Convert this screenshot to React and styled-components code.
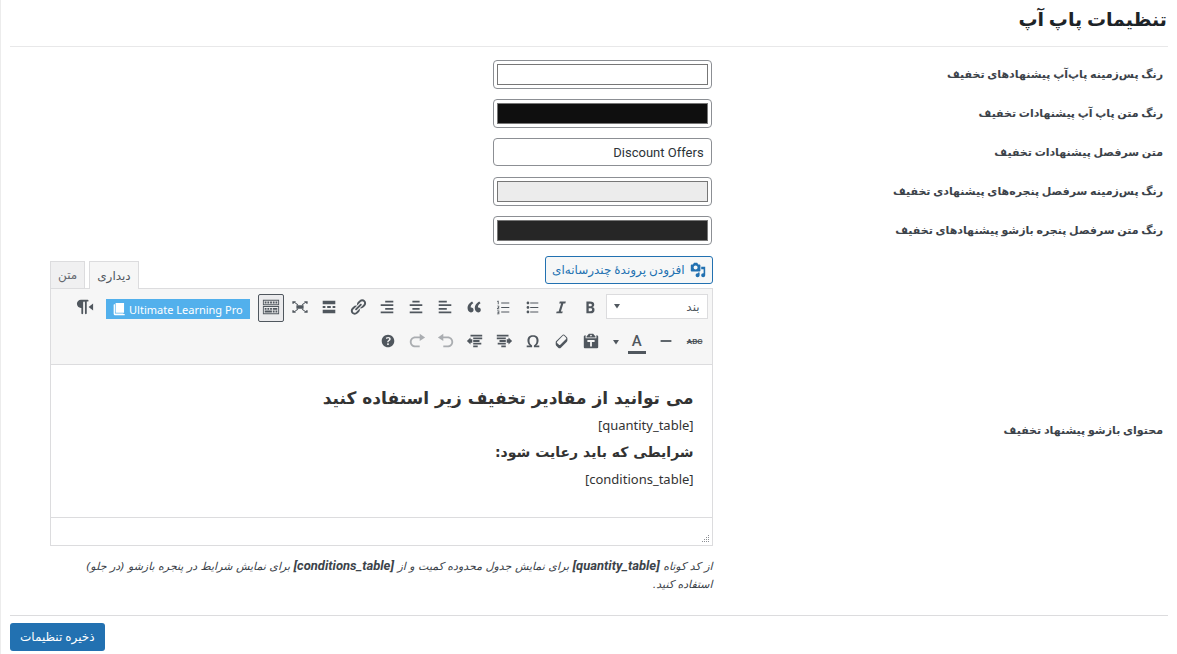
import React, { useState } from "react";
import styled, { createGlobalStyle } from "styled-components";

const icons = {
    bold: "M6 4v13h4.54c1.37 0 2.46-.33 3.26-1 .8-.66 1.2-1.58 1.2-2.77 0-.84-.17-1.51-.51-2.01s-.9-.85-1.67-1.03v-.09c.57-.1 1.02-.4 1.36-.9s.51-1.13.51-1.91c0-1.14-.39-1.98-1.17-2.5C12.75 4.26 11.5 4 9.78 4H6zm2.57 5.15V6.26h1.36c.73 0 1.27.11 1.61.32.34.22.51.58.51 1.07 0 .54-.16.92-.47 1.15s-.82.35-1.51.35h-1.5zm0 2.19h1.6c1.44 0 2.16.53 2.16 1.61 0 .6-.17 1.05-.51 1.34s-.86.43-1.57.43H8.57v-3.38z",
    italic: "M14.78 6h-2.13l-2.8 9h2.12l-.62 2H4.6l.62-2h2.14l2.8-9H8.03l.62-2h6.75z",
    bullets: "M5.5 7C4.67 7 4 6.33 4 5.5 4 4.68 4.67 4 5.5 4 6.32 4 7 4.68 7 5.5 7 6.33 6.32 7 5.5 7zM8 5h9v1H8V5zm-2.5 7c-.83 0-1.5-.67-1.5-1.5C4 9.68 4.67 9 5.5 9c.82 0 1.5.68 1.5 1.5 0 .83-.68 1.5-1.5 1.5zM8 10h9v1H8v-1zm-2.5 7c-.83 0-1.5-.67-1.5-1.5 0-.82.67-1.5 1.5-1.5.82 0 1.5.68 1.5 1.5 0 .83-.68 1.5-1.5 1.5zM8 15h9v1H8v-1z",
    numbers: "M4 3h1.2v4H4.2V4.2H3.4V3.5zM8 5h9v1H8zM3.4 8.5h2.4v2L4.6 11.6h1.3v.9H3.3v-.8l1.5-1.6v-.8H3.4zM8 10h9v1H8zM3.4 14h2.5v4H3.3v-.8H5v-.8H3.8v-.8H5v-.8H3.4zM8 15h9v1H8z",
    quote: "M9.49 13.22c0-.74-.2-1.38-.61-1.9-.62-.78-1.83-.88-2.53-.72-.29-1.65 1.11-3.75 2.92-4.65L7.88 4c-2.73 1.3-5.42 4.28-4.96 8.05C3.21 14.43 4.59 16 6.54 16c.85 0 1.56-.25 2.12-.75s.83-1.18.83-2.03zm8.05 0c0-.74-.2-1.38-.61-1.9-.63-.78-1.83-.88-2.53-.72-.29-1.65 1.11-3.75 2.92-4.65L15.93 4c-2.73 1.3-5.41 4.28-4.95 8.05.29 2.38 1.66 3.95 3.61 3.95.85 0 1.56-.25 2.12-.75s.83-1.18.83-2.03z",
    alignLeft: "M12 5V3H3v2h9zm5 4V7H3v2h14zm-5 4v-2H3v2h9zm5 4v-2H3v2h14z",
    alignCenter: "M14 5V3H6v2h8zm3 4V7H3v2h14zm-3 4v-2H6v2h8zm3 4v-2H3v2h14z",
    alignRight: "M17 5V3H8v2h9zm0 4V7H3v2h14zm0 4v-2H8v2h9zm0 4v-2H3v2h14z",
    link: "M17.74 2.76c1.68 1.69 1.68 4.41 0 6.1l-1.53 1.52c-1.12 1.12-2.7 1.47-4.14 1.09l2.62-2.61.76-.77.76-.76c.84-.84.84-2.2 0-3.04-.84-.85-2.2-.85-3.04 0l-.77.76-3.38 3.38c-.37-1.44-.02-3.02 1.1-4.14l1.52-1.53c1.69-1.68 4.42-1.68 6.1 0zM8.59 13.43l5.34-5.34c.42-.42.42-1.1 0-1.52-.44-.43-1.13-.39-1.53 0l-5.33 5.34c-.42.42-.42 1.1 0 1.52.44.43 1.13.39 1.52 0zm-.76 2.29l4.14-4.15c.38 1.44.03 3.02-1.09 4.14l-1.52 1.53c-1.69 1.68-4.41 1.68-6.1 0-1.68-1.68-1.68-4.42 0-6.1l1.53-1.52c1.12-1.12 2.7-1.47 4.14-1.1l-4.14 4.15c-.85.84-.85 2.2 0 3.05.84.84 2.2.84 3.04 0z",
    more: "M17 7V3H3v4h14zM6 11V9H3v2h3zm6 0V9H8v2h4zm5 0V9h-3v2h3zm0 6v-4H3v4h14z",
    fullscreen: "M6 8h8v4H6zM1.5 3.5h4L4.6 4.6 8 7.2l-.7.8-3.5-2.6-1 1.1H1.5zM18.500 3.500v3h-1.300l-1-1.100L12.700 8l-.7-.8 3.400-2.600-.9-1.100zM1.500 16.500v-3h1.300l1 1.100L7.300 12l.7.8-3.400 2.600.9 1.100zM18.500 16.500h-4l.9-1.100L12 12.800l.7-.8 3.500 2.600 1-1.100h1.300z",
    kitchensink: "M19 2v6H1V2h18zm-1 5V3H2v4h16zM5 4v2H3V4h2zm3 0v2H6V4h2zm3 0v2H9V4h2zm3 0v2h-2V4h2zm3 0v2h-2V4h2zm2 5v9H1V9h18zm-1 8v-7H2v7h16zM5 11v2H3v-2h2zm3 0v2H6v-2h2zm3 0v2H9v-2h2zm6 0v2h-5v-2h5zm-6 3v2H3v-2h8zm3 0v2h-2v-2h2zm3 0v2h-2v-2h2z",
    direction: "M5.52 2h7.43c.55 0 1 .45 1 1s-.45 1-1 1h-1v13c0 .55-.45 1-1 1s-1-.45-1-1V5c0-.55-.45-1-1-1s-1 .45-1 1v12c0 .55-.45 1-1 1s-1-.45-1-1v-5.96h-.43C3.02 11.04 1 9.02 1 6.52S3.02 2 5.52 2zM19 6v8l-5-4z",
    rule: "M4 9h12v2H4z",
    paste: "M12.38 2L15 5v1H5V5l2.64-3h4.74zM10 5c.55 0 1-.44 1-1 0-.55-.45-1-1-1s-1 .45-1 1c0 .56.45 1 1 1zm5.45-1H17c.55 0 1 .45 1 1v12c0 .56-.45 1-1 1H3c-.55 0-1-.44-1-1V5c0-.55.45-1 1-1h1.55L4 4.63V7h12V4.63zM14 11V9H6v2h3v5h2v-5h3z",
    eraser: "M14.29 4.59l1.1 1.11c.41.4.61.94.61 1.47v2.12c0 .53-.2 1.07-.61 1.47l-6.63 6.63c-.4.41-.94.61-1.47.61s-1.07-.2-1.47-.61l-1.11-1.1-1.1-1.11c-.41-.4-.61-.94-.61-1.47v-2.12c0-.54.2-1.07.61-1.48l6.63-6.62c.4-.41.94-.61 1.47-.61s1.06.2 1.47.61zm-6.21 9.7l6.42-6.42c.39-.39.39-1.03 0-1.43L12.36 4.3c-.19-.19-.45-.29-.72-.29s-.52.1-.71.29l-6.42 6.42c-.39.4-.39 1.04 0 1.43l2.14 2.14c.38.38 1.04.38 1.43 0z",
    omega: "M10 5.4c1.27 0 2.24.36 2.91 1.08.66.71 1 1.76 1 3.13 0 1.28-.23 2.37-.69 3.27-.47.89-1.27 1.52-2.22 2.12v2h6v-2h-3.69c.92-.64 1.62-1.34 2.12-2.34.49-1.01.74-2.13.74-3.35 0-1.78-.55-3.19-1.65-4.22S11.92 3.54 10 3.54s-3.43.53-4.52 1.57c-1.1 1.04-1.65 2.44-1.65 4.2 0 1.21.24 2.31.73 3.33.48 1.01 1.19 1.71 2.1 2.36H3v2h6v-2c-.98-.64-1.8-1.28-2.24-2.17-.45-.89-.67-1.96-.67-3.22 0-1.37.33-2.41 1-3.13C7.75 5.76 8.72 5.4 10 5.4z",
    indent: "M2 3h13v2H2zM2 6h10v2H2zM5 9h7v2H5zM3 12h9v2H3zM7 15h5v2H7zM13 8h2V6l4 4-4 4v-2h-2z",
    outdent: "M5 3h13v2H5zM8 6h10v2H8zM8 9h7v2H8zM8 12h9v2H8zM8 15h5v2H8zM7 8H5V6l-4 4 4 4v-2h2z",
    undo: "M12 5H7V2L1 6l6 4V7h5c2.2 0 4 1.8 4 4s-1.8 4-4 4H7v2h5c3.3 0 6-2.7 6-6s-2.700-6-6-6z",
    redo: "M8 5h5V2l6 4-6 4V7H8c-2.2 0-4 1.8-4 4s1.8 4 4 4h5v2H8c-3.3 0-6-2.7-6-6s2.7-6 6-6z",
    help: "M17 10c0-3.87-3.14-7-7-7-3.87 0-7 3.13-7 7s3.13 7 7 7c3.86 0 7-3.13 7-7zm-6.3 1.48H9.14v-.43c0-.38.08-.7.24-.98s.46-.57.88-.89c.41-.29.68-.53.81-.71.14-.18.2-.39.2-.62 0-.25-.09-.44-.28-.58-.19-.13-.45-.19-.79-.19-.58 0-1.25.19-2 .57l-.64-1.28c.87-.49 1.8-.74 2.77-.74.81 0 1.45.2 1.92.58.48.39.71.91.71 1.55 0 .43-.09.8-.29 1.11-.19.32-.57.67-1.11 1.06-.38.28-.61.49-.71.63-.1.15-.15.34-.15.57v.35zm-1.47 2.74c-.18-.17-.27-.42-.27-.73 0-.33.08-.58.26-.75s.43-.25.77-.25c.32 0 .57.09.75.26s.27.42.27.74c0 .3-.09.55-.27.72-.18.18-.43.27-.75.27-.33 0-.58-.09-.76-.26z",
    media: "M13 11V4c0-.55-.45-1-1-1h-1.67L9 1H5L3.67 3H2c-.55 0-1 .45-1 1v7c0 .55.45 1 1 1h10c.55 0 1-.45 1-1zM7 4.5c1.38 0 2.5 1.12 2.5 2.5S8.38 9.5 7 9.5 4.5 8.38 4.5 7 5.62 4.5 7 4.5zM14 6h5v10.5c0 1.38-1.12 2.5-2.5 2.5S14 17.88 14 16.5s1.12-2.5 2.5-2.5c.17 0 .34.02.5.05V9h-3V6zm-4 8.05V13h2v3.5c0 1.38-1.12 2.5-2.5 2.5S7 17.88 7 16.5 8.12 14 9.500 14c.17 0 .34.02.5.05z",
    book: "M4 0h13v15H4zM2 2h1v14h13v1h2v2H4c-2 0-3-1-3-3V4c0-1 0-2 1-2z",
    arrow: "M4 6h12l-6 9z",
    grip: "M16 4h2v2h-2zM12 8h2v2h-2zM16 8h2v2h-2zM8 12h2v2H8zM12 12h2v2h-2zM16 12h2v2h-2zM4 16h2v2H4zM8 16h2v2H8zM12 16h2v2h-2zM16 16h2v2h-2z",
};

const firstRow = [
    ["bold", "پررنگ"],
    ["italic", "کج"],
    ["bullets", "فهرست نشانه‌دار"],
    ["numbers", "فهرست شماره‌دار"],
    ["quote", "نقل قول"],
    ["alignLeft", "چپ‌چین"],
    ["alignCenter", "وسط‌چین"],
    ["alignRight", "راست‌چین"],
    ["link", "پیوند"],
    ["more", "ادامه مطلب"],
    ["fullscreen", "تمام صفحه"],
];

const secondRow = [
    ["paste", "چسباندن متن"],
    ["eraser", "پاک کردن قالب"],
    ["omega", "نویسه ویژه"],
    ["indent", "کاهش تورفتگی"],
    ["outdent", "افزایش تورفتگی"],
    ["undo", "برگردان", true],
    ["redo", "از نو", true],
    ["help", "راهنما"],
];

const fields = [
    { id: "popup-bg", label: "رنگ پس‌زمینه پاپ‌آپ پیشنهادهای تخفیف", type: "color", value: "#ffffff" },
    { id: "popup-color", label: "رنگ متن پاپ آپ پیشنهادات تخفیف", type: "color", value: "#0f0f0f" },
    { id: "heading-text", label: "متن سرفصل پیشنهادات تخفیف", type: "text", value: "Discount Offers" },
    { id: "heading-bg", label: "رنگ پس‌زمینه سرفصل پنجره‌های پیشنهادی تخفیف", type: "color", value: "#ececec" },
    { id: "heading-color", label: "رنگ متن سرفصل پنجره بازشو پیشنهادهای تخفیف", type: "color", value: "#262626" },
];

function Icon({ name, size = 18 }) {
    return (
        <svg width={size} height={size} viewBox="0 0 20 20" fill="currentColor" fillRule="evenodd" aria-hidden="true">
            <path d={icons[name]} />
        </svg>
    );
}

function App() {
    const [tab, setTab] = useState("visual");

    return (
        <>
            <GlobalStyle />
            <Page dir="rtl" lang="fa" onSubmit={(e) => e.preventDefault()}>
                <Title>تنظیمات پاپ آپ</Title>
                <Fields>
                    {fields.map((field) => (
                        <Row key={field.id}>
                            <Label htmlFor={field.id}>{field.label}</Label>
                            <Cell>
                                {field.type === "color"
                                    ? <ColorInput id={field.id} type="color" defaultValue={field.value} />
                                    : <TextInput id={field.id} type="text" defaultValue={field.value} />}
                            </Cell>
                        </Row>
                    ))}
                    <Row>
                        <Label as="span" id="content-label">محتوای بازشو پیشنهاد تخفیف</Label>
                        <EditorCell>
                            <EditorTools>
                                <MediaButton type="button">
                                    <Icon name="media" size={16} />
                                    افزودن پروندهٔ چندرسانه‌ای
                                </MediaButton>
                                <Tabs>
                                    <Tab type="button" $active={tab === "visual"} onClick={() => setTab("visual")}>دیداری</Tab>
                                    <Tab type="button" $active={tab === "text"} onClick={() => setTab("text")}>متن</Tab>
                                </Tabs>
                            </EditorTools>
                            <Editor>
                                <Toolbar>
                                    <ToolbarRow>
                                        <FormatBox>
                                            <FormatSelect aria-label="قالب">
                                                <option>بند</option>
                                            </FormatSelect>
                                            <Icon name="arrow" size={10} />
                                        </FormatBox>
                                        {firstRow.map(([name, title]) => (
                                            <ToolButton type="button" key={name} aria-label={title}>
                                                <Icon name={name} />
                                            </ToolButton>
                                        ))}
                                        <ToolButton type="button" $pressed aria-label="نوار ابزار">
                                            <Icon name="kitchensink" />
                                        </ToolButton>
                                        <PluginButton type="button" dir="ltr">
                                            <Icon name="book" size={13} />
                                            Ultimate Learning Pro
                                        </PluginButton>
                                        <ToolButton type="button" aria-label="جهت متن">
                                            <Icon name="direction" />
                                        </ToolButton>
                                    </ToolbarRow>
                                    <ToolbarRow>
                                        <ToolButton type="button" aria-label="خط‌خورده">
                                            <Strike>ABC</Strike>
                                        </ToolButton>
                                        <ToolButton type="button" aria-label="خط افقی">
                                            <Icon name="rule" />
                                        </ToolButton>
                                        <ColorButton type="button" aria-label="رنگ متن">
                                            <Letter>A</Letter>
                                            <Icon name="arrow" size={10} />
                                        </ColorButton>
                                        {secondRow.map(([name, title, disabled]) => (
                                            <ToolButton type="button" key={name} aria-label={title} disabled={disabled}>
                                                <Icon name={name} />
                                            </ToolButton>
                                        ))}
                                    </ToolbarRow>
                                </Toolbar>
                                <Content
                                    role="textbox"
                                    aria-multiline="true"
                                    aria-labelledby="content-label"
                                    contentEditable
                                    suppressContentEditableWarning
                                >
                                    <h2>می توانید از مقادیر تخفیف زیر استفاده کنید</h2>
                                    <p>[quantity_table]</p>
                                    <h4>شرایطی که باید رعایت شود:</h4>
                                    <p>[conditions_table]</p>
                                </Content>
                                <StatusBar>
                                    <Icon name="grip" size={10} />
                                </StatusBar>
                            </Editor>
                            <Help>
                                از کد کوتاه <strong>[quantity_table]</strong> برای نمایش جدول محدوده کمیت و از <strong>[conditions_table]</strong> برای نمایش شرایط در پنجره بازشو (در جلو) استفاده کنید.
                            </Help>
                        </EditorCell>
                    </Row>
                </Fields>
                <Footer>
                    <SaveButton type="submit">ذخیره تنظیمات</SaveButton>
                </Footer>
            </Page>
        </>
    );
}

export default App;

const GlobalStyle = createGlobalStyle`
    * {
        box-sizing: border-box;
    }

    body {
        margin: 0;
        background: #fff;
        color: #3c434a;
        font-family: Roboto, "DejaVu Sans", sans-serif;
        font-size: 13px;
    }

    button, input, select {
        font-family: inherit;
        margin: 0;
    }

    svg {
        display: block;
        flex: none;
    }
`;

const Page = styled.form`
    min-height: 100vh;
    padding: 0 9px;
    border-left: 1px solid #ececec;
`;

const Title = styled.h1`
    margin: 0;
    height: 47px;
    padding: 4px 1px 0;
    border-bottom: 1px solid #e8e8e9;
    color: #1d2327;
    font-size: 19px;
    line-height: 32px;
    font-weight: 700;
`;

const Fields = styled.div`
    display: flex;
    flex-direction: column;
    gap: 10px;
    padding: 13px 0 9px;
`;

const Row = styled.div`
    display: grid;
    grid-template-columns: 5fr 8fr;
    align-items: center;
`;

const Label = styled.label`
    padding-right: 5px;
    font-size: 11px;
    line-height: 18px;
    font-weight: 700;
`;

const Cell = styled.div`
    min-width: 0;
    min-height: 29px;
    padding: 0 11px 0 40px;
`;

const EditorCell = styled(Cell)`
    padding: 1px 10px 12px 40px;
`;

const ColorInput = styled.input`
    display: block;
    width: 219px;
    height: 29px;
    padding: 3px;
    border: 1px solid #8c8f94;
    border-radius: 4px;
    background: #fff;

    &::-webkit-color-swatch-wrapper {
        padding: 0;
    }

    &::-webkit-color-swatch {
        border: 1px solid #777;
        border-radius: 0;
    }
`;

const TextInput = styled.input`
    display: block;
    width: 219px;
    height: 28px;
    padding: 0 7px;
    border: 1px solid #8c8f94;
    border-radius: 4px;
    background: #fff;
    color: #2c3338;
    font-size: 13px;
`;

const EditorTools = styled.div`
    display: flex;
    justify-content: space-between;
    align-items: flex-start;
    height: 32px;
`;

const MediaButton = styled.button`
    display: flex;
    align-items: center;
    gap: 5px;
    height: 28px;
    padding: 0 6px;
    border: 1px solid #2271b1;
    border-radius: 3px;
    background: #f6f7f7;
    color: #2271b1;
    font-size: 12px;
    white-space: nowrap;
`;

const Tabs = styled.div`
    display: flex;
    align-self: flex-end;
    gap: 4px;
`;

const Tab = styled.button`
    height: ${(props) => (props.$active ? "28px" : "27px")};
    padding: 0 7px;
    border: 1px solid #dcdcde;
    border-bottom: 0;
    background: ${(props) => (props.$active ? "#f6f6f6" : "#f0f0f1")};
    color: ${(props) => (props.$active ? "#50575e" : "#646970")};
    font-size: 12px;
    /* the active tab covers the editor's top border */
    margin-bottom: ${(props) => (props.$active ? "-1px" : "0")};
    z-index: 1;
`;

const Editor = styled.div`
    border: 1px solid #dcdcde;
`;

const Toolbar = styled.div`
    display: flex;
    flex-direction: column;
    gap: 6px;
    padding: 5px 4px 8px;
    border-bottom: 1px solid #dcdcde;
    background: #f6f6f6;
`;

const ToolbarRow = styled.div`
    display: flex;
    align-items: center;
    gap: 3px;
    height: 28px;
`;

const FormatBox = styled.div`
    position: relative;
    align-self: flex-start;
    width: 102px;
    height: 25px;

    svg {
        position: absolute;
        left: 6px;
        top: 7px;
        color: #50575e;
        pointer-events: none;
    }
`;

const FormatSelect = styled.select`
    width: 100%;
    height: 100%;
    padding: 0 7px;
    border: 1px solid #dcdcde;
    border-radius: 0;
    appearance: none;
    background: #fff;
    color: #50575e;
    font-size: 12px;
`;

const ToolButton = styled.button`
    display: flex;
    flex: none;
    align-items: center;
    justify-content: center;
    width: 26px;
    height: 28px;
    padding: 0 0 2px;
    border: 1px solid ${(props) => (props.$pressed ? "#50575e" : "transparent")};
    border-radius: 2px;
    background: ${(props) => (props.$pressed ? "#ebebed" : "transparent")};
    color: #50575e;

    &:disabled {
        opacity: 0.45;
    }
`;

const ColorButton = styled(ToolButton)`
    justify-content: space-between;
    width: 43px;
    padding: 0 3px;
`;

const Letter = styled.span`
    width: 18px;
    border-bottom: 3px solid #50575e;
    font-size: 15px;
    line-height: 20px;
    font-weight: 500;
    text-align: center;
`;

const Strike = styled.span`
    font-size: 8px;
    font-weight: 700;
    text-decoration: line-through;
`;

const PluginButton = styled.button`
    display: flex;
    align-items: center;
    gap: 3px;
    height: 20px;
    margin: 2px 5px 0;
    padding: 0 7px;
    border: 0;
    background: #52b0ec;
    color: #fff;
    font-family: "Noto Sans", sans-serif;
    font-size: 11px;
    white-space: nowrap;
`;

const Content = styled.div`
    min-height: 152px;
    padding: 19px 18px 24px;
    color: #333;
    font-family: "Noto Sans", "DejaVu Sans", sans-serif;
    font-size: 13px;
    line-height: 27px;
    outline: 0;

    h2, h4, p {
        margin: 0;
    }

    h2 {
        font-family: "DejaVu Sans", sans-serif;
        font-size: 17px;
        line-height: 28px;
    }

    h4 {
        font-family: "DejaVu Sans", sans-serif;
        font-size: 14px;
    }
`;

const StatusBar = styled.div`
    display: flex;
    align-items: flex-end;
    justify-content: flex-start;
    height: 28px;
    padding: 2px;
    border-top: 1px solid #dcdcde;
    color: #8c8f94;
`;

const Help = styled.p`
    margin: 11px 0 0;
    font-family: "DejaVu Sans", sans-serif;
    font-size: 11px;
    line-height: 18px;
    font-style: italic;

    strong {
        font-family: Roboto, sans-serif;
        font-size: 13px;
    }
`;

const Footer = styled.div`
    display: flex;
    justify-content: flex-end;
    padding-top: 7px;
    border-top: 1px solid #dcdcde;
`;

const SaveButton = styled.button`
    height: 28px;
    padding: 0 10px;
    border: 0;
    border-radius: 3px;
    background: #2271b1;
    color: #fff;
    font-size: 12px;
`;
